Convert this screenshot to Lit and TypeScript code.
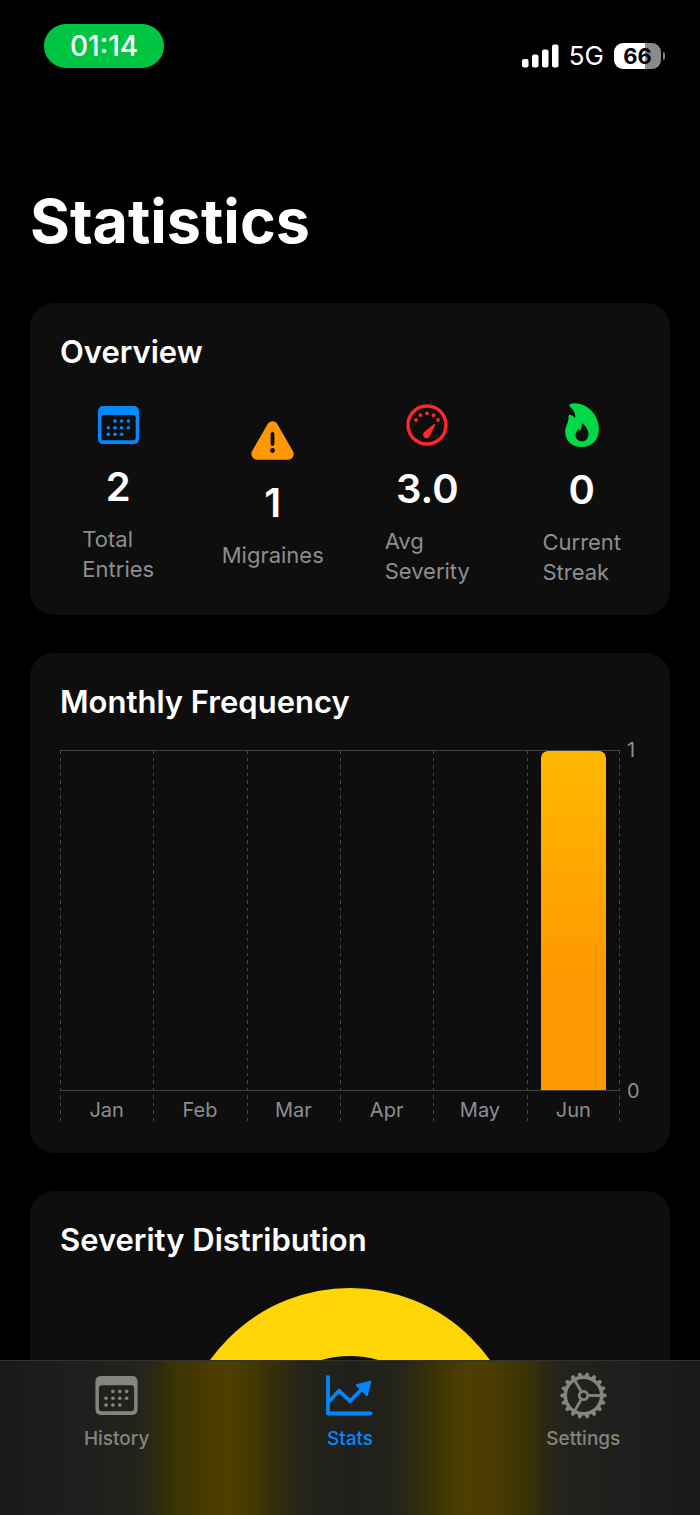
import { LitElement, html, svg, css } from "lit";
import { customElement, state } from "lit/decorators.js";
import { classMap } from "lit/directives/class-map.js";

const calendarIcon = svg`
  <path fill="currentColor" fill-rule="evenodd" d="M5.500 0H35Q40.500 0 40.500 5.500V32Q40.500 37.500 35 37.500H5.500Q0 37.500 0 32V5.500Q0 0 5.500 0ZM6 8.800Q3.300 8.800 3.300 11.500V31Q3.300 33.800 6 33.800H34.500Q37.200 33.800 37.200 31V11.500Q37.200 8.800 34.500 8.800Z"/>
  ${[
    [16.8, 14.8], [23.4, 14.8], [30, 14.8],
    [10.2, 21.4], [16.8, 21.4], [23.4, 21.4], [30, 21.4],
    [10.2, 28], [16.8, 28], [23.4, 28],
  ].map(([x, y]) => svg`<circle cx=${x} cy=${y} r="1.75" fill="currentColor"/>`)}`;

const gearTeeth = Array.from({ length: 18 }, (_, i) => i * 20);

const icons = {
  calendar: html`<svg width="41" height="38" viewBox="0 0 40.500 37.500" aria-hidden="true">${calendarIcon}</svg>`,
  warning: html`<svg width="43" height="39" viewBox="0 0 43 39" aria-hidden="true">
    <path d="M21.500 6L37 33H6Z" fill="currentColor" stroke="currentColor" stroke-width="11.400" stroke-linejoin="round"/>
    <path d="M21.500 12.800V23" stroke="#0e0e0e" stroke-width="3.800" stroke-linecap="round"/>
    <circle cx="21.500" cy="29.500" r="2.400" fill="#0e0e0e"/>
  </svg>`,
  gauge: html`<svg width="42" height="42" viewBox="-21 -21 42 42" aria-hidden="true">
    <circle r="19" fill="none" stroke="currentColor" stroke-width="3.400"/>
    <g fill="currentColor">
      <circle cx="-11" cy="-5" r="1.900"/><circle cx="-6.600" cy="-9.800" r="1.900"/>
      <circle cx="0" cy="-11.700" r="1.900"/><circle cx="6.600" cy="-9.800" r="1.900"/>
      <circle cx="11" cy="-5" r="1.900"/>
      <path d="M6.500 -.7Q7.700 -1.400 8.100 -.2Q8.200 .3 7.900 1L3.100 10.600A3.600 3.600 0 1 1 -2.700 7Z"/>
    </g>
  </svg>`,
  flame: html`<svg width="34" height="44" viewBox="0 0 101 132" aria-hidden="true">
    <path fill="currentColor" fill-rule="evenodd" d="M14 4C20 -1 35 0 45 3C80 13 101 44 101 78C101 112 80 132 49 132C20 132 0 112 0 86C0 68 11 62 10 40Q10 34 16 36C23 38 28 42 30 46C32 32 25 20 15 12Q10 7 14 4ZM50 61C60 66 70 80 70 94C70 107 62 115 51 115C39 115 31 107 31 97C31 88 36 83 39 77C41 78 43 81 45 83C49 78 50 70 50 61Z"/>
  </svg>`,
  history: html`<svg width="43" height="39" viewBox="0 0 40.500 37.500" aria-hidden="true">${calendarIcon}</svg>`,
  stats: html`<svg width="47" height="41" viewBox="0 0 47 41" aria-hidden="true">
    <g fill="none" stroke="currentColor" stroke-width="3.800" stroke-linecap="round" stroke-linejoin="round">
      <path d="M2 2V38.500H44.500"/>
      <path d="M3 26.500L13 15.800L24 26L37 13"/>
    </g>
    <path d="M30.500 10L44.500 6.500L41 20.500Z" fill="currentColor" stroke="currentColor" stroke-width="1.600" stroke-linejoin="round"/>
  </svg>`,
  gear: html`<svg width="47" height="47" viewBox="-23.500 -23.500 47 47" aria-hidden="true">
    <circle r="18.200" fill="none" stroke="currentColor" stroke-width="3.500"/>
    <circle r="4.200" fill="none" stroke="currentColor" stroke-width="2.800"/>
    ${gearTeeth.map((a) => svg`<path transform="rotate(${a})" d="M19 -2.600L22.800 -1.400Q23.500 0 22.800 1.400L19 2.600Z" fill="currentColor"/>`)}
    ${[0, 120, 240].map((a) => svg`<path transform="rotate(${a})" d="M5 0H18" stroke="currentColor" stroke-width="2.800"/>`)}
  </svg>`,
};

const stats = [
  { icon: icons.calendar, tone: "blue", value: "2", label: ["Total", "Entries"] },
  { icon: icons.warning, tone: "orange", value: "1", label: ["Migraines"] },
  { icon: icons.gauge, tone: "red", value: "3.0", label: ["Avg", "Severity"] },
  { icon: icons.flame, tone: "green", value: "0", label: ["Current", "Streak"] },
];

const months = [
  { name: "Jan", share: 0 },
  { name: "Feb", share: 0 },
  { name: "Mar", share: 0 },
  { name: "Apr", share: 0 },
  { name: "May", share: 0 },
  { name: "Jun", share: 100 },
];

const tabs = [
  { name: "History", icon: icons.history },
  { name: "Stats", icon: icons.stats },
  { name: "Settings", icon: icons.gear },
];

@customElement("app-root")
export class AppRoot extends LitElement {
  @state() private active = "Stats";

  static styles = css`
    :host {
      display: flex;
      flex-direction: column;
      height: 100vh;
      background: #000;
      color: #fff;
      font-family: Inter, "Liberation Sans", sans-serif;
    }
    * { box-sizing: border-box; }
    h1, h2, p { margin: 0; }
    svg { display: block; }

    .status {
      flex: none;
      display: flex;
      justify-content: space-between;
      align-items: flex-start;
      padding: 24px 35px 0 44px;
    }
    .time {
      padding: 0 26px;
      border-radius: 22px;
      background: #00c543;
      font-size: 28px;
      font-weight: 500;
      line-height: 44px;
    }
    .signals {
      display: flex;
      align-items: center;
      gap: 10px;
      padding-top: 16px;
      font-size: 26px;
      line-height: 32px;
    }
    .battery { display: flex; align-items: center; gap: 2px; }
    .cell {
      width: 47px;
      border-radius: 9px;
      background: linear-gradient(90deg, #fff 66%, #8a8a8a 66%);
      color: #000;
      font-size: 22px;
      font-weight: 700;
      line-height: 26px;
      text-align: center;
    }
    .nub { width: 2px; height: 8px; border-radius: 0 2px 2px 0; background: #7c7c7c; }

    .content {
      flex: 1;
      min-height: 0;
      overflow-y: auto;
      scrollbar-width: none;
      padding: 111px 30px 38px;
    }
    .title { font-size: 61px; font-weight: 700; line-height: 76px; }
    .cards { display: flex; flex-direction: column; gap: 38px; padding-top: 44px; }
    .card {
      display: flex;
      flex-direction: column;
      gap: 29px;
      padding: 30px 30px 28px;
      border-radius: 24px;
      background: #0e0e0e;
    }
    .heading { font-size: 31px; font-weight: 600; line-height: 38px; }

    .overview {
      display: grid;
      grid-template-columns: repeat(4, 1fr);
      column-gap: 38px;
      align-items: center;
      padding-top: 3px;
    }
    .stat { display: flex; flex-direction: column; align-items: center; }
    .value { padding-top: 18px; font-size: 40px; font-weight: 600; line-height: 50px; }
    .label { padding-top: 12px; color: #8d8d93; font-size: 22px; line-height: 30px; }
    .label span { display: block; }
    .blue { color: #0088ff; }
    .orange { color: #ff9800; }
    .red { color: #ff2828; }
    .green { color: #00da46; }

    .chart {
      display: flex;
      gap: 7px;
      padding-bottom: 4px;
      color: #8d8d93;
      font-size: 20px;
      line-height: 24px;
    }
    .months { flex: 1; display: flex; }
    .month {
      --dash: repeating-linear-gradient(180deg, #484848 0 4px, #0e0e0e00 4px 8px, #484848 8px 11px, #0e0e0e00 11px 15px);
      flex: 1;
      background: var(--dash) left / 1px 100% no-repeat;
    }
    .month:last-child {
      background: var(--dash) left / 1px 100% no-repeat, var(--dash) right / 1px 100% no-repeat;
    }
    .plot {
      display: flex;
      align-items: flex-end;
      justify-content: center;
      height: 341px;
      border-top: 1px solid #444;
      border-bottom: 1px solid #444;
    }
    .bar {
      width: 70%;
      border-radius: 7px 7px 0 0;
      background: linear-gradient(180deg, #ffb800, #ff9800 68%);
    }
    .name { padding: 8px 0 0; line-height: 22px; text-align: center; }
    .axis {
      display: flex;
      flex-direction: column;
      justify-content: space-between;
      width: 13px;
      height: 365px;
      margin-top: -12px;
    }

    .donut { align-self: center; }

    .tabs {
      flex: none;
      display: grid;
      grid-template-columns: repeat(3, 1fr);
      align-items: start;
      height: 155px;
      padding-top: 11px;
      border-top: 1px solid #323230;
      background: linear-gradient(90deg,
        #191919 0%, #1e1f1e 12%, #23231d 19%, #2b2815 22%, #3b3303 25%,
        #4b3d00 30%, #4e3e00 33%, #433900 36%, #352f09 39%, #25241a 43%,
        #1f201d 50%,
        #25241a 57%, #352f09 61%, #433900 64%, #4e3e00 67%, #4b3d00 70%,
        #3b3303 75%, #2b2815 78%, #23231d 81%, #1e1f1e 88%, #191919 100%);
    }
    .tab {
      display: flex;
      flex-direction: column;
      align-items: center;
      gap: 8px;
      padding: 0;
      border: 0;
      background: none;
      color: #858580;
      font: 500 19px/24px Inter, "Liberation Sans", sans-serif;
      cursor: pointer;
    }
    .tab.active { color: #0088ff; }
    .glyph { display: flex; align-items: center; height: 47px; }
  `;

  render() {
    return html`
      <header class="status">
        <span class="time">01:14</span>
        <div class="signals">
          <svg width="37" height="24" viewBox="0 0 37 24" fill="#fff" role="img" aria-label="Signal strength">
            <rect x="0" y="15" width="6.500" height="8.500" rx="2"/>
            <rect x="10" y="10.500" width="6.500" height="13" rx="2"/>
            <rect x="20" y="5.500" width="6.500" height="18" rx="2"/>
            <rect x="30" y="0.500" width="6.500" height="23" rx="2"/>
          </svg>
          <span>5G</span>
          <div class="battery"><div class="cell">66</div><div class="nub"></div></div>
        </div>
      </header>

      <main class="content">
        <h1 class="title">Statistics</h1>
        <div class="cards">
          <section class="card">
            <h2 class="heading">Overview</h2>
            <div class="overview">
              ${stats.map(
                (s) => html`<div class="stat">
                  <div class=${s.tone}>${s.icon}</div>
                  <p class="value">${s.value}</p>
                  <p class="label">${s.label.map((l) => html`<span>${l}</span>`)}</p>
                </div>`
              )}
            </div>
          </section>

          <section class="card">
            <h2 class="heading">Monthly Frequency</h2>
            <div class="chart">
              <div class="months">
                ${months.map(
                  (m) => html`<div class="month">
                    <div class="plot"><div class="bar" style="height:${m.share}%"></div></div>
                    <p class="name">${m.name}</p>
                  </div>`
                )}
              </div>
              <div class="axis"><span>1</span><span>0</span></div>
            </div>
          </section>

          <section class="card">
            <h2 class="heading">Severity Distribution</h2>
            <svg class="donut" width="344" height="344" viewBox="0 0 344 344" role="img" aria-label="Severity distribution">
              <circle cx="172" cy="172" r="138" fill="none" stroke="#ffd506" stroke-width="68"/>
            </svg>
          </section>
        </div>
      </main>

      <nav class="tabs">
        ${tabs.map(
          (t) => html`<button
            class=${classMap({ tab: true, active: this.active === t.name })}
            @click=${() => (this.active = t.name)}
          >
            <span class="glyph">${t.icon}</span>
            <span>${t.name}</span>
          </button>`
        )}
      </nav>
    `;
  }
}
